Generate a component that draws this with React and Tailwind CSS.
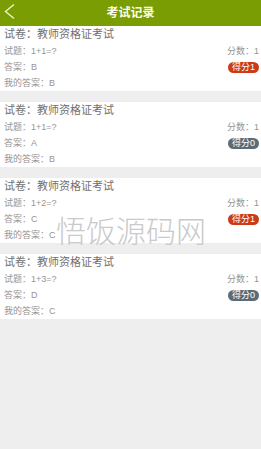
import React from 'react';

const records = [
    { question: '1+1=?', answer: 'B', mine: 'B', score: 1, got: 1 },
    { question: '1+1=?', answer: 'A', mine: 'B', score: 1, got: 0 },
    { question: '1+2=?', answer: 'C', mine: 'C', score: 1, got: 1 },
    { question: '1+3=?', answer: 'D', mine: 'C', score: 1, got: 0 },
];

const font = { fontFamily: '"Liberation Sans", "Noto Sans CJK SC", sans-serif' };

const RecordCard = ({ record }) => (
    <div className="bg-white h-[65px] pl-[4px] pr-[2px] overflow-hidden">
        <p className="text-[11px] leading-[16px] text-[#707070]">试卷：教师资格证考试</p>
        <div className="pt-[1px] text-[9px] leading-[16px] text-[#959595]">
            <div className="flex justify-between">
                <span>试题：{record.question}</span>
                <span>分数：{record.score}</span>
            </div>
            <div className="flex justify-between items-center">
                <span>答案：{record.answer}</span>
                <span
                    className={
                        record.got > 0
                            ? 'h-[11px] leading-[11px] px-[4px] rounded-full text-white bg-[#cc3a18]'
                            : 'h-[11px] leading-[11px] px-[4px] rounded-full text-white bg-[#5c6c77]'
                    }
                >
                    得分{record.got}
                </span>
            </div>
            <div>我的答案：{record.mine}</div>
        </div>
    </div>
);

export default function App() {
    return (
        <div className="relative w-[261px] h-[449px] bg-[#eeeeee] overflow-hidden" style={font}>
            <div className="h-[26px] bg-[#7b9d04] flex items-center relative">
                <svg className="absolute left-[4px] top-[4px]" width="12" height="16" viewBox="0 0 12 16">
                    <polyline points="10,0.5 1.5,7.5 10,14.5" fill="none" stroke="#eef4c4" strokeWidth="1.4" />
                </svg>
                <h1 className="w-full text-center text-[12px] font-bold text-[#fbfde8]">考试记录</h1>
            </div>
            <div className="flex flex-col gap-[11px]">
                {records.map((r, i) => (
                    <RecordCard key={i} record={r} />
                ))}
            </div>
            <div
                className="absolute left-[56px] top-[213px] text-[30px] leading-[32px] text-[#cacaca] pointer-events-none"
                style={{ fontFamily: '"Noto Sans CJK SC", serif', fontWeight: 300 }}
            >
                悟饭源码网
            </div>
        </div>
    );
}
